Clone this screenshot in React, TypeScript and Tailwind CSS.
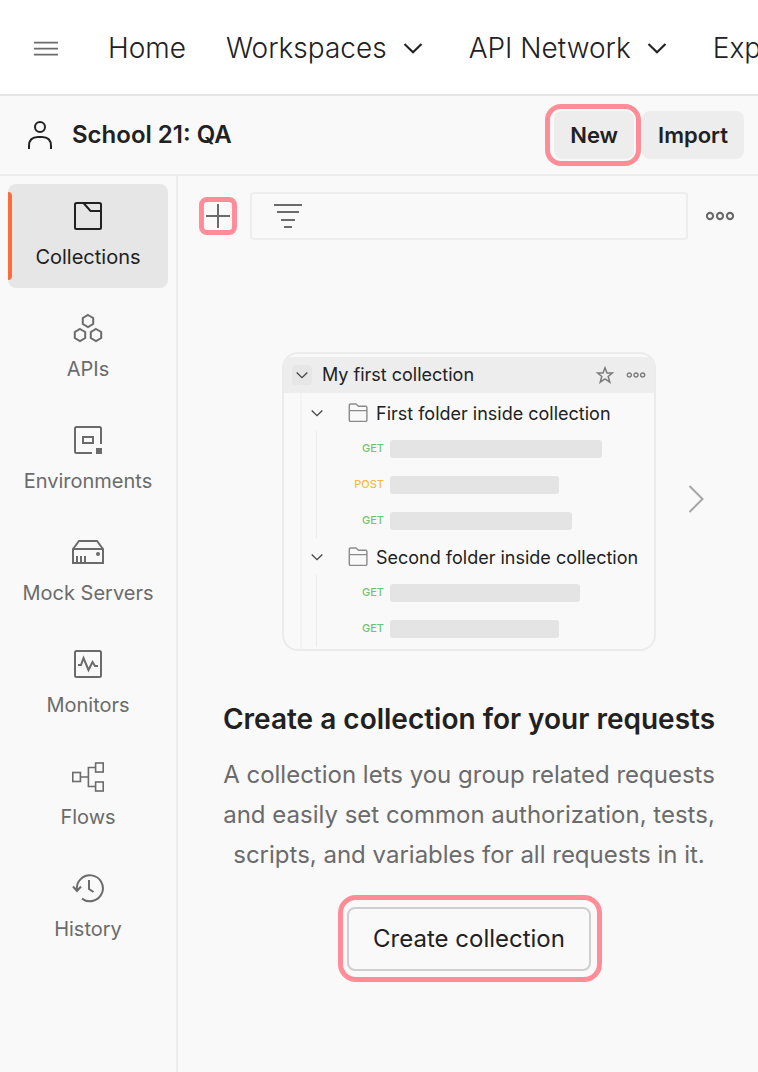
import type { ReactNode } from "react";

function Chevron({ className }: { className: string }) {
  return (
    <svg viewBox="0 0 32 32" className={className} fill="none" stroke="currentColor" strokeWidth="2.1" aria-hidden="true">
      <path d="M7.5 12 16 20.2 24.5 12" />
    </svg>
  );
}

function Dots({ className }: { className: string }) {
  return (
    <svg viewBox="0 0 32 12" className={className} fill="none" stroke="currentColor" strokeWidth="2.1" aria-hidden="true">
      <circle cx="6" cy="6" r="3.1" />
      <circle cx="16" cy="6" r="3.1" />
      <circle cx="26" cy="6" r="3.1" />
    </svg>
  );
}

function Highlight({ className }: { className: string }) {
  return <span aria-hidden="true" className={`pointer-events-none absolute border-5 border-[#ff8c96] ${className}`} />;
}

const hexagon = (x: number, y: number) =>
  `M${x} ${y - 6} L${x + 5.2} ${y - 3} V${y + 3} L${x} ${y + 6} L${x - 5.2} ${y + 3} V${y - 3} Z`;

const sections: { label: string; icon: ReactNode }[] = [
  {
    label: "Collections",
    icon: (
      <>
        <rect x="3" y="3" width="26" height="26" rx="1.5" />
        <path d="M11.5 3 18.5 11H29" />
      </>
    ),
  },
  {
    label: "APIs",
    icon: (
      <>
        <path d={hexagon(16, 9)} />
        <path d={hexagon(8, 23)} />
        <path d={hexagon(24, 23)} />
      </>
    ),
  },
  {
    label: "Environments",
    icon: (
      <>
        <path d="M20 29H4.5Q3 29 3 27.5V4.5Q3 3 4.5 3H27.5Q29 3 29 4.5V20" />
        <rect x="11" y="13" width="10" height="6" />
        <rect x="24" y="24" width="6" height="6" fill="currentColor" stroke="none" />
      </>
    ),
  },
  {
    label: "Mock Servers",
    icon: (
      <>
        <path d="M1 13 7 5H25L31 13V27H1ZM1 13H31M5 20V27M9 20V27M13 20V27" />
        <circle cx="26" cy="18" r="2" fill="currentColor" stroke="none" />
      </>
    ),
  },
  {
    label: "Monitors",
    icon: (
      <>
        <rect x="3" y="3" width="26" height="26" rx="1.5" />
        <path d="M6 17H9L11.5 10 16.5 22 20.5 14 23 18H26" />
      </>
    ),
  },
  {
    label: "Flows",
    icon: (
      <g strokeWidth="1.6">
        <rect x="0.8" y="12.5" width="7.6" height="9" />
        <rect x="23.6" y="3" width="7.6" height="9" />
        <rect x="23.6" y="22" width="7.6" height="9" />
        <path d="M8.4 17H16.4M23.6 7.5H16.4V26.5H23.6" />
      </g>
    ),
  },
  {
    label: "History",
    icon: (
      <>
        <path d="M5 18A13 13 0 1 1 10 26.6" />
        <path d="M1 14.5 5 19 9 14.5M17 8V17L21.5 20" />
      </>
    ),
  },
];

const folders = [
  {
    name: "First folder inside collection",
    requests: [
      { method: "GET", width: "w-[212px]" },
      { method: "POST", width: "w-[169px]" },
      { method: "GET", width: "w-[182px]" },
    ],
  },
  {
    name: "Second folder inside collection",
    requests: [
      { method: "GET", width: "w-[190px]" },
      { method: "GET", width: "w-[169px]" },
    ],
  },
];

function TopNav() {
  return (
    <header className="flex h-24 items-center gap-[50px] overflow-hidden border-b-2 border-[#e6e6e6] bg-white pt-0.5 pl-[34px]">
      <button type="button" aria-label="Menu" className="shrink-0 text-[#6b6b6b]">
        <svg viewBox="0 0 24 16" className="h-4 w-6" stroke="currentColor" strokeWidth="1.6" aria-hidden="true">
          <path d="M0 2.6H24M0 8.6H24M0 14.6H24" />
        </svg>
      </button>
      <nav className="flex shrink-0 items-center gap-10 text-[28px] leading-10 font-light whitespace-nowrap">
        <a href="#home">Home</a>
        <button type="button" className="flex items-center gap-2.5">
          Workspaces
          <Chevron className="size-8" />
        </button>
        <button type="button" className="flex items-center gap-2.5">
          API Network
          <Chevron className="size-8" />
        </button>
        <a href="#explore">Explore</a>
      </nav>
    </header>
  );
}

function WorkspaceBar() {
  return (
    <div className="flex h-20 items-center border-b-2 border-[#ececec] pr-3.5 pl-6">
      <svg viewBox="0 0 32 32" className="size-8 shrink-0" fill="none" stroke="currentColor" strokeWidth="2" aria-hidden="true">
        <circle cx="16" cy="8" r="5" />
        <path d="M5 30V27Q5 18 14 18H18Q27 18 27 27V30" />
      </svg>
      <h1 className="ml-4 grow text-2xl font-semibold">School 21: QA</h1>
      <div className="flex gap-2 text-[22px] font-semibold">
        <button type="button" className="relative h-12 rounded-lg bg-[#ededed] px-4">
          New
          <Highlight className="-inset-y-[7px] -right-[7px] -left-[9px] rounded-2xl" />
        </button>
        <button type="button" className="h-12 rounded-lg bg-[#ededed] px-4">
          Import
        </button>
      </div>
    </div>
  );
}

function Sidebar() {
  return (
    <nav className="w-[178px] shrink-0 border-r-2 border-[#ececec] p-2">
      <ul className="flex flex-col gap-2">
        {sections.map(({ label, icon }, index) => (
          <li key={label}>
            <a
              href={`#${label.toLowerCase().replace(" ", "-")}`}
              aria-current={index === 0 ? "page" : undefined}
              className={`relative flex h-26 flex-col items-center gap-2 rounded-lg pt-4 text-xl leading-[34px] whitespace-nowrap ${
                index === 0 ? "bg-[#e6e6e6] text-[#212121]" : "text-[#6b6b6b]"
              }`}
            >
              {index === 0 && <span className="absolute inset-y-2 left-0 w-1 rounded-r-sm bg-[#ff6c37]" />}
              <svg viewBox="0 0 32 32" className="size-8" fill="none" stroke="currentColor" strokeWidth="2" aria-hidden="true">
                {icon}
              </svg>
              {label}
            </a>
          </li>
        ))}
      </ul>
    </nav>
  );
}

function Toolbar() {
  return (
    <div className="flex items-center pr-[22px] pl-6">
      <button type="button" aria-label="Create new" className="relative p-1 text-[#6b6b6b]">
        <svg viewBox="0 0 24 24" className="size-6" stroke="currentColor" strokeWidth="2" aria-hidden="true">
          <path d="M12 0V24M0 12H24" />
        </svg>
        <Highlight className="-inset-[3px] rounded-lg" />
      </button>
      <label className="ml-4 flex h-12 min-w-0 grow items-center rounded border-2 border-[#ededed] pl-5 text-[#6b6b6b]">
        <svg viewBox="0 0 32 32" className="size-8 shrink-0" stroke="currentColor" strokeWidth="2" aria-hidden="true">
          <path d="M2 5H30M5 12H27M9 20H23M12 27H20" />
        </svg>
        <input type="text" aria-label="Filter collections" className="min-w-0 grow bg-transparent px-2 text-xl outline-none" />
      </label>
      <button type="button" aria-label="More actions" className="ml-4 text-[#6b6b6b]">
        <Dots className="h-3 w-8" />
      </button>
    </div>
  );
}

function CollectionPreview() {
  return (
    <div className="w-[374px] overflow-hidden rounded-2xl border-2 border-[#ebebeb] pt-[3px] text-lg">
      <div className="flex h-9 items-center bg-[#ededed] pr-[7px] pl-2">
        <span className="flex size-5 items-center justify-center rounded-sm bg-[#e6e6e6] text-[#444]">
          <Chevron className="size-5" />
        </span>
        <span className="ml-2.5 grow">My first collection</span>
        <svg viewBox="0 0 20 20" className="size-5 text-[#7c7c7c]" fill="none" stroke="currentColor" strokeWidth="1.5" aria-hidden="true">
          <path d="M10 2.8 12 8H17.3L13.2 11.4 14.8 17.2 10 14 5.2 17.2 6.8 11.4 2.7 8H8Z" />
        </svg>
        <Dots className="ml-2.5 h-2 w-[22px] text-[#7c7c7c]" />
      </div>
      <ul className="ml-4 border-l-2 border-[#f3f3f3] pt-0.5 pb-0.5">
        {folders.map((folder) => (
          <li key={folder.name}>
            <div className="flex h-9 items-center pl-[5px]">
              <Chevron className="size-5 text-[#444]" />
              <svg viewBox="0 0 20 20" className="ml-[21px] size-5 text-[#8a8a8a]" fill="none" stroke="currentColor" strokeWidth="1.4" aria-hidden="true">
                <path d="M1.3 17.2V2.2Q1.3 1 2.5 1H8L10.5 3.3H17.7Q18.9 3.3 18.9 4.5V17.2Q18.9 18.4 17.7 18.4H2.5Q1.3 18.4 1.3 17.2ZM1.3 7.6H18.9" />
              </svg>
              <span className="ml-2 pt-0.5 whitespace-nowrap">{folder.name}</span>
            </div>
            <ul className="ml-3.5 border-l border-[#ededed]">
              {folder.requests.map(({ method, width }, index) => (
                <li key={index} className="flex h-9 items-center gap-1.5">
                  <span className={`w-[67px] text-right text-[11px] font-medium ${method === "GET" ? "text-[#6cc47a]" : "text-[#f5b94e]"}`}>
                    {method}
                  </span>
                  <span className={`h-[18px] rounded-[3px] bg-[#e4e4e4] ${width}`} />
                </li>
              ))}
            </ul>
          </li>
        ))}
      </ul>
    </div>
  );
}

export default function App() {
  return (
    <div className="flex min-h-screen flex-col bg-[#f9f9f9] font-['Inter',sans-serif] text-[#212121]">
      <TopNav />
      <WorkspaceBar />
      <div className="flex grow">
        <Sidebar />
        <main className="min-w-0 grow pt-4">
          <Toolbar />
          <section className="mt-28 flex flex-col items-center pl-0.5 text-center">
            <div className="grid w-full grid-cols-[1fr_auto_1fr] items-center text-left">
              <span />
              <CollectionPreview />
              <button type="button" aria-label="Next" className="ml-6 w-8 pb-1.5 text-[#a6a6a6]">
                <svg viewBox="0 0 32 32" className="size-8" fill="none" stroke="currentColor" strokeWidth="2" aria-hidden="true">
                  <path d="M9.5 3 22.5 16 9.5 29" />
                </svg>
              </button>
            </div>
            <h2 className="mt-12 text-[28px] leading-10 font-semibold">Create a collection for your requests</h2>
            <p className="mt-4 max-w-[520px] text-2xl leading-10 text-[#6b6b6b]">
              A collection lets you group related requests and easily set common authorization, tests, scripts, and variables for all
              requests in it.
            </p>
            <button type="button" className="relative mt-8 h-16 rounded-lg border-2 border-[#cfcfcf] px-6 text-2xl">
              Create collection
              <Highlight className="-top-[14px] -right-[13px] -bottom-[13px] -left-[11px] rounded-[18px]" />
            </button>
          </section>
        </main>
      </div>
    </div>
  );
}
